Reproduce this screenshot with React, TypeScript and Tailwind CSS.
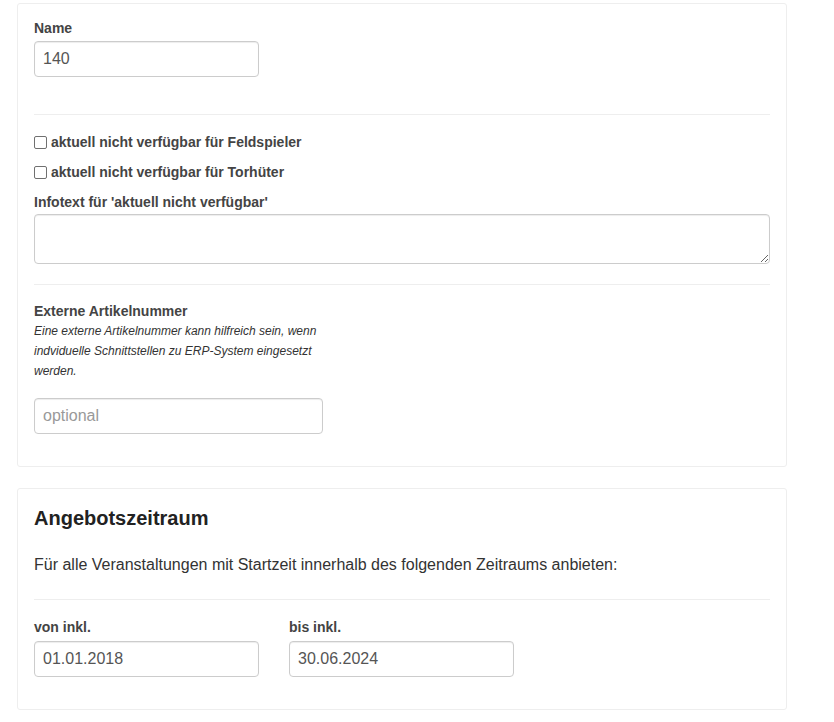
import React from "react";

const font = { fontFamily: '"Liberation Sans", Arial, sans-serif' };

function Check({ label }: { label: string }) {
  return (
    <label className="flex items-center h-5 text-[14px] font-bold text-[#444]">
      <span className="w-[13px] h-[13px] border-[1.5px] border-[#707070] rounded-[2px] bg-white mr-[4px] box-border" />
      {label}
    </label>
  );
}

const inputCls =
  "h-[36px] border border-[#ccc] rounded-[4px] bg-white px-[8px] text-[16px] text-[#555] shadow-[inset_0_1px_1px_rgba(0,0,0,0.075)] outline-none";

export default function App() {
  return (
    <div className="bg-white min-h-[722px] pt-[3px] text-[#333]" style={font}>
      <div className="ml-[17px] w-[770px] border border-[#eee] rounded-[3px] px-[16px] pt-[14px] pb-[32px]">
        <div className="h-5 leading-5 text-[14px] font-bold text-[#444]">Name</div>
        <input className={`${inputCls} mt-[3px] w-[225px]`} defaultValue="140" />
        <div className="mt-[37px] border-t border-[#eee]" />
        <div className="mt-[17px]">
          <Check label="aktuell nicht verfügbar für Feldspieler" />
        </div>
        <div className="mt-[10px]">
          <Check label="aktuell nicht verfügbar für Torhüter" />
        </div>
        <div className="mt-[10px] h-5 leading-5 text-[14px] font-bold text-[#444]">
          Infotext für 'aktuell nicht verfügbar'
        </div>
        <textarea
          className="block mt-[2px] w-full h-[50px] border border-[#ccc] rounded-[4px] bg-white shadow-[inset_0_1px_1px_rgba(0,0,0,0.075)] outline-none"
        />
        <div className="mt-[20px] border-t border-[#eee]" />
        <div className="mt-[16px] h-5 leading-5 text-[14px] font-bold text-[#444]">Externe Artikelnummer</div>
        <div className="w-[290px] text-[12px] leading-[20px] italic text-[#333]">
          Eine externe Artikelnummer kann hilfreich sein, wenn indviduelle Schnittstellen zu ERP-System eingesetzt werden.
        </div>
        <input
          className={`${inputCls} block mt-[17px] w-[289px] placeholder:text-[#999]`}
          placeholder="optional"
        />
      </div>

      <div className="ml-[17px] mt-[21px] w-[770px] border border-[#eee] rounded-[3px] px-[16px] pt-[15px] pb-[32px]">
        <h2 className="h-[28px] leading-[28px] text-[20px] font-bold text-[#222]">Angebotszeitraum</h2>
        <p className="mt-[22px] h-[22px] leading-[22px] text-[16px] text-[#333]">
          Für alle Veranstaltungen mit Startzeit innerhalb des folgenden Zeitraums anbieten:
        </p>
        <div className="mt-[23px] border-t border-[#eee]" />
        <div className="mt-[17px] flex gap-[30px]">
          <div className="flex flex-col">
            <div className="h-5 leading-5 text-[14px] font-bold text-[#444]">von inkl.</div>
            <input className={`${inputCls} mt-[4px] w-[225px] h-[36px]`} defaultValue="01.01.2018" />
          </div>
          <div className="flex flex-col">
            <div className="h-5 leading-5 text-[14px] font-bold text-[#444]">bis inkl.</div>
            <input className={`${inputCls} mt-[4px] w-[225px] h-[36px]`} defaultValue="30.06.2024" />
          </div>
        </div>
      </div>
    </div>
  );
}
